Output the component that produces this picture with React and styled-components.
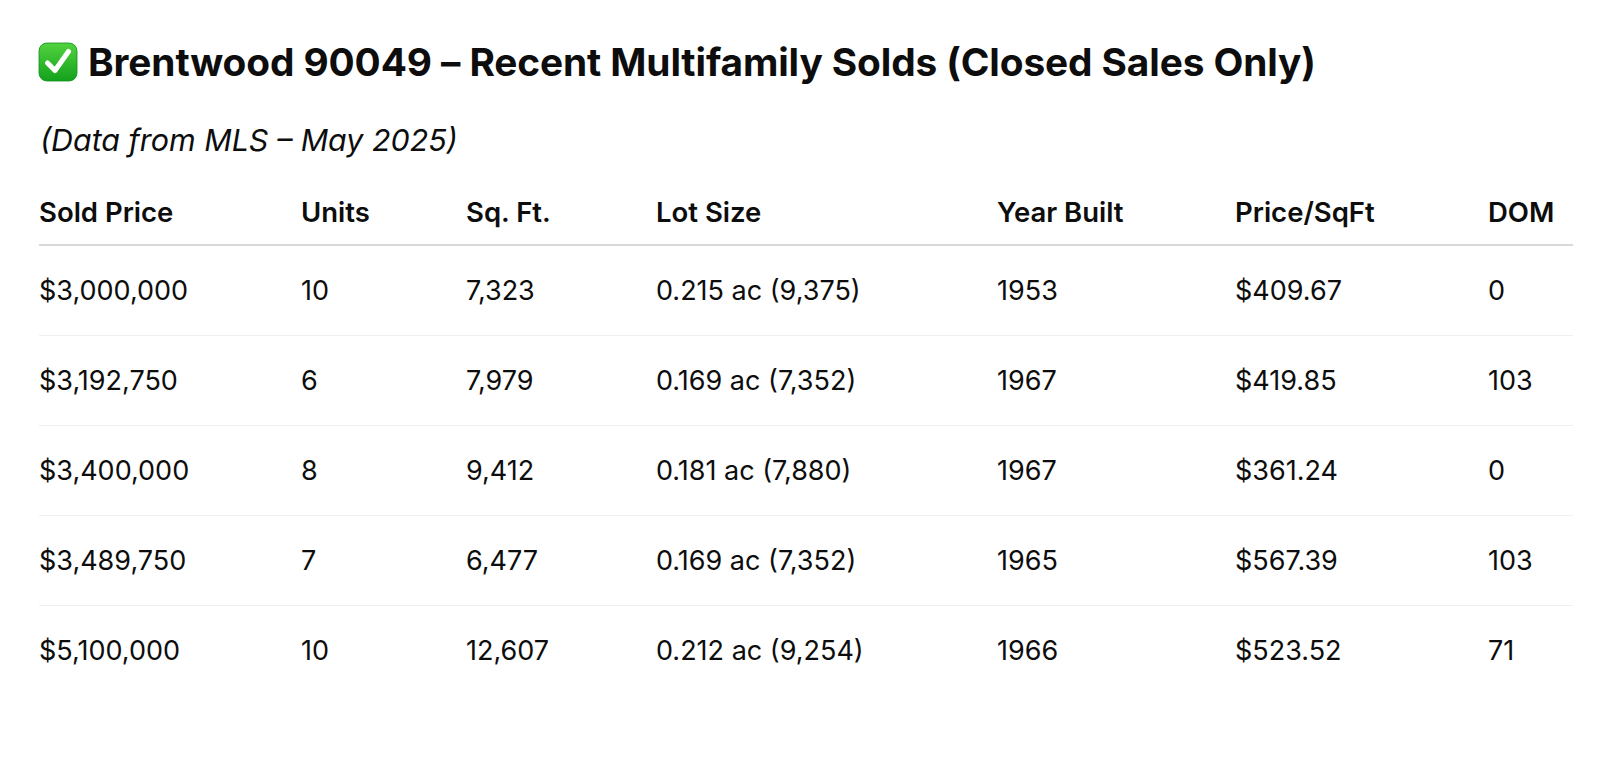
import React from "react";
import styled, { createGlobalStyle } from "styled-components";

const GlobalStyle = createGlobalStyle`
  html, body {
    margin: 0;
    padding: 0;
    background: #ffffff;
  }
  body {
    font-family: Inter, "Noto Sans", "Liberation Sans", sans-serif;
    color: #0d0d0d;
  }
`;

const Page = styled.div`
  padding: 37px 27px 0 39px;
`;

const Title = styled.h1`
  display: flex;
  align-items: center;
  gap: 10px;
  margin: 0 0 0 -1px;
  font-size: 38.8px;
  font-weight: 700;
  line-height: 50px;
  letter-spacing: -0.1px;
`;

const Subtitle = styled.p`
  margin: 33px 0 0 1px;
  font-size: 30.4px;
  font-style: italic;
  line-height: 40px;
`;

const Table = styled.table`
  margin-top: 20px;
  width: 1534px;
  border-collapse: collapse;
  table-layout: fixed;
`;

const HeadCell = styled.th`
  text-align: left;
  font-size: 27.5px;
  font-weight: 600;
  height: 64px;
  padding: 0;
  border-bottom: 2px solid #d9d9d9;
`;

const Row = styled.tr`
  border-bottom: ${(p) => (p.$last ? "none" : "1px solid #efefef")};
`;

const Cell = styled.td`
  font-size: 27px;
  height: 89px;
  padding: 0;
`;

const CheckIcon = () => (
  <svg width="40" height="40" viewBox="0 0 40 40">
    <defs>
      <linearGradient id="g" x1="0" y1="0" x2="0" y2="1">
        <stop offset="0" stopColor="#52d33f" />
        <stop offset="1" stopColor="#13a11c" />
      </linearGradient>
    </defs>
    <rect x="1" y="1" width="38" height="38" rx="8" fill="url(#g)" stroke="#0f8f1a" strokeWidth="0.8" />
    <path
      d="M9.5 21 L17 28.5 L30.5 9.5"
      fill="none"
      stroke="#ffffff"
      strokeWidth="5"
      strokeLinecap="round"
      strokeLinejoin="round"
    />
  </svg>
);

const columns = [
  { label: "Sold Price", width: 262 },
  { label: "Units", width: 165 },
  { label: "Sq. Ft.", width: 190 },
  { label: "Lot Size", width: 341 },
  { label: "Year Built", width: 238 },
  { label: "Price/SqFt", width: 253 },
  { label: "DOM", width: 85 },
];

const rows = [
  ["$3,000,000", "10", "7,323", "0.215 ac (9,375)", "1953", "$409.67", "0"],
  ["$3,192,750", "6", "7,979", "0.169 ac (7,352)", "1967", "$419.85", "103"],
  ["$3,400,000", "8", "9,412", "0.181 ac (7,880)", "1967", "$361.24", "0"],
  ["$3,489,750", "7", "6,477", "0.169 ac (7,352)", "1965", "$567.39", "103"],
  ["$5,100,000", "10", "12,607", "0.212 ac (9,254)", "1966", "$523.52", "71"],
];

const App = () => (
  <>
    <GlobalStyle />
    <Page>
      <Title>
        <CheckIcon />
        Brentwood 90049 – Recent Multifamily Solds (Closed Sales Only)
      </Title>
      <Subtitle>(Data from MLS – May 2025)</Subtitle>
      <Table>
        <colgroup>
          {columns.map((c) => (
            <col key={c.label} style={{ width: c.width }} />
          ))}
        </colgroup>
        <thead>
          <tr>
            {columns.map((c) => (
              <HeadCell key={c.label}>{c.label}</HeadCell>
            ))}
          </tr>
        </thead>
        <tbody>
          {rows.map((r, i) => (
            <Row key={i} $last={i === rows.length - 1}>
              {r.map((v, j) => (
                <Cell key={j}>{v}</Cell>
              ))}
            </Row>
          ))}
        </tbody>
      </Table>
    </Page>
  </>
);

export default App;
